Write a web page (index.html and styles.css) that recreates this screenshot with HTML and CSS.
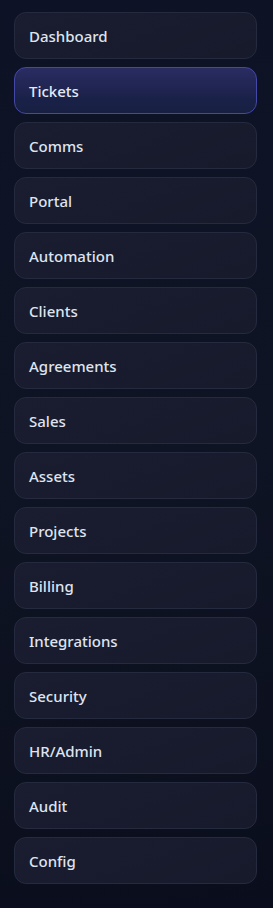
FILE: index.html
```html
<!DOCTYPE html>
<html lang="en">
<head>
    <meta charset="UTF-8">
    <meta name="viewport" content="width=device-width">
    <title>Nav</title>
    <link rel="stylesheet" href="styles.css">
</head>
<body>
<nav class="side-nav">
    <a class="nav-item">Dashboard</a>
    <a class="nav-item active">Tickets</a>
    <a class="nav-item">Comms</a>
    <a class="nav-item">Portal</a>
    <a class="nav-item">Automation</a>
    <a class="nav-item">Clients</a>
    <a class="nav-item">Agreements</a>
    <a class="nav-item">Sales</a>
    <a class="nav-item">Assets</a>
    <a class="nav-item">Projects</a>
    <a class="nav-item">Billing</a>
    <a class="nav-item">Integrations</a>
    <a class="nav-item">Security</a>
    <a class="nav-item">HR/Admin</a>
    <a class="nav-item">Audit</a>
    <a class="nav-item">Config</a>
</nav>
</body>
</html>
```

FILE: styles.css
```css
*{
    margin: 0;
    padding: 0;
    box-sizing: border-box;
}
html,body{
    width: 100%;
    height: 100%;
}
body{
    background: linear-gradient(170deg, #0d1226 0%, #0f1424 50%, #0a0e1c 100%);
    font-family: "Noto Sans", Inter, sans-serif;
    overflow: hidden;
}
.side-nav{
    display: flex;
    flex-direction: column;
    gap: 8px;
    padding: 12px 16px 0 14px;
}
.nav-item{
    display: flex;
    align-items: center;
    height: 47px;
    padding: 0 14px;
    border: 1px solid #262a3e;
    border-radius: 12px;
    background: linear-gradient(160deg, #1a1d30 0%, #161a2b 100%);
    color: #dfe4f0;
    font-size: 15px;
    font-weight: 500;
    text-decoration: none;
}
.nav-item.active{
    border-color: #4448a6;
    background: linear-gradient(180deg, #2a2c62 0%, #1a2148 70%, #172042 100%);
    color: #e6e9f5;
}
```
